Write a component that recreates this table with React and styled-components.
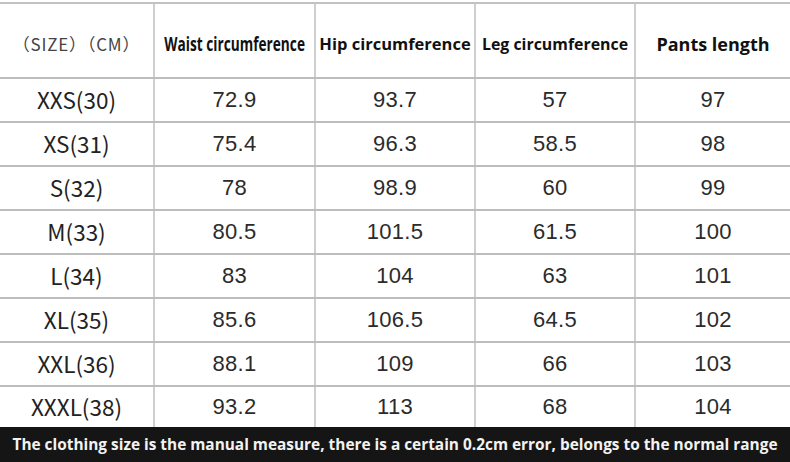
import React from "react";
import styled, { createGlobalStyle } from "styled-components";

const Global = createGlobalStyle`
  html, body { margin: 0; padding: 0; background: #ffffff; }
  body { width: 790px; height: 462px; overflow: hidden; }
`;

const Page = styled.div`
  width: 790px;
  height: 462px;
  display: flex;
  flex-direction: column;
  background: #ffffff;
  padding-top: 2px;
  box-sizing: border-box;
`;

const Table = styled.div`
  display: flex;
  flex-direction: column;
  border-top: 2px solid #c2c2c2;
`;

const Row = styled.div`
  display: grid;
  grid-template-columns: 153px 161px 160px 160px 156px;
  height: ${(p) => p.$h}px;
  border-bottom: ${(p) => (p.$last ? "none" : "2px solid #bdbdbd")};
`;

const Cell = styled.div`
  display: flex;
  align-items: center;
  justify-content: center;
  border-left: ${(p) => (p.$first ? "none" : "2px solid #cfcfcf")};
  color: #262626;
  white-space: nowrap;
  overflow: hidden;
`;

const SizeText = styled.span`
  font-family: "Noto Sans CJK SC", "Noto Sans", sans-serif;
  font-weight: 400;
  font-size: 22.5px;
  color: #222;
  margin-top: -3px;
`;

const ValueText = styled.span`
  font-family: "Liberation Sans", Arial, sans-serif;
  font-size: 22px;
  color: #2b2b2b;
  letter-spacing: 0.3px;
`;

const UnitHead = styled.span`
  font-family: "Noto Sans CJK SC", "Noto Sans", sans-serif;
  font-weight: 400;
  font-size: 17px;
  color: #444;
  letter-spacing: 0.8px;
  margin-top: 6px;
`;

const HeadText = styled.span`
  font-family: "Open Sans", "Noto Sans", sans-serif;
  font-weight: 700;
  font-size: ${(p) => p.$size}px;
  color: #111;
  display: inline-block;
  transform: scaleX(${(p) => p.$sx || 1});
  margin-top: 6px;
`;

const Footer = styled.div`
  flex: 1;
  background: #151515;
  display: flex;
  align-items: center;
  justify-content: center;
  color: #f2f2f2;
  font-family: "Open Sans", "Noto Sans", sans-serif;
  font-weight: 700;
  font-size: 15.4px;
  white-space: nowrap;
`;

const rows = [
  ["XXS(30)", "72.9", "93.7", "57", "97"],
  ["XS(31)", "75.4", "96.3", "58.5", "98"],
  ["S(32)", "78", "98.9", "60", "99"],
  ["M(33)", "80.5", "101.5", "61.5", "100"],
  ["L(34)", "83", "104", "63", "101"],
  ["XL(35)", "85.6", "106.5", "64.5", "102"],
  ["XXL(36)", "88.1", "109", "66", "103"],
  ["XXXL(38)", "93.2", "113", "68", "104"],
];

export default function App() {
  return (
    <Page>
      <Global />
      <Table>
        <Row $h={73}>
          <Cell $first>
            <UnitHead>（SIZE）（CM）</UnitHead>
          </Cell>
          <Cell>
            <HeadText $size={19} $sx={0.72}>Waist circumference</HeadText>
          </Cell>
          <Cell>
            <HeadText $size={16.5}>Hip circumference</HeadText>
          </Cell>
          <Cell>
            <HeadText $size={15.9}>Leg circumference</HeadText>
          </Cell>
          <Cell>
            <HeadText $size={18}>Pants length</HeadText>
          </Cell>
        </Row>
        {rows.map((r, i) => (
          <Row key={r[0]} $h={i === rows.length - 1 ? 40 : 42} $last={i === rows.length - 1}>
            <Cell $first>
              <SizeText>{r[0]}</SizeText>
            </Cell>
            {r.slice(1).map((v, j) => (
              <Cell key={j}>
                <ValueText>{v}</ValueText>
              </Cell>
            ))}
          </Row>
        ))}
      </Table>
      <Footer>
        The clothing size is the manual measure, there is a certain 0.2cm error, belongs to the normal range
      </Footer>
    </Page>
  );
}
